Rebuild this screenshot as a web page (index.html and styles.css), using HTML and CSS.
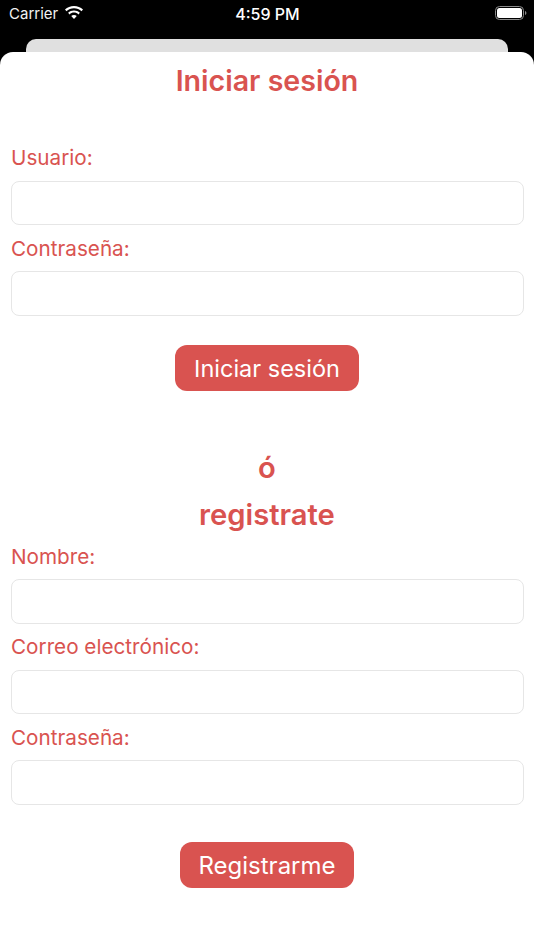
FILE: index.html
```html
<!DOCTYPE html>
<html lang="es">
<head>
<meta charset="utf-8">
<title>Iniciar sesión</title>
<link rel="stylesheet" href="styles.css">
</head>
<body>
<div class="status">
  <div class="status-left">
    <span class="carrier">Carrier</span>
    <svg class="wifi" width="20" height="15" viewBox="0 0 18 13"><path d="M9 2.600c2.600 0 5 1 6.800 2.700l1.300-1.400C15 1.900 12.100.7 9 .7S3 1.900.9 3.900l1.300 1.400C4 3.600 6.400 2.600 9 2.600z" fill="#fff"/><path d="M9 6.600c1.500 0 2.900.6 4 1.600l1.300-1.400C12.900 5.500 11 4.700 9 4.700s-3.900.8-5.300 2.100L5 8.200c1.100-1 2.500-1.600 4-1.600z" fill="#fff"/><path d="M9 8.700c-1 0-1.800.4-2.500 1L9 12.400l2.500-2.700c-.7-.6-1.500-1-2.500-1z" fill="#fff"/></svg>
  </div>
  <span class="time">4:59 PM</span>
  <svg class="battery" width="32" height="14" viewBox="0 0 32 14"><rect x="0.500" y="0.500" width="28" height="13" rx="4" fill="none" stroke="#8a8a8a"/><rect x="2" y="2" width="25" height="10" rx="2.500" fill="#fff"/><path d="M30 5v4c.8-.3 1.400-1.100 1.400-2S30.800 5.300 30 5z" fill="#8a8a8a"/></svg>
</div>
<div class="sheet-back"></div>
<main class="sheet">
  <h1 class="title">Iniciar sesión</h1>
  <form class="login">
    <label class="label">Usuario:</label>
    <div class="input"></div>
    <label class="label">Contraseña:</label>
    <div class="input"></div>
    <button type="button" class="btn">Iniciar sesión</button>
  </form>
  <h2 class="sub or">ó</h2>
  <h2 class="sub reg">registrate</h2>
  <form class="register">
    <label class="label">Nombre:</label>
    <div class="input"></div>
    <label class="label">Correo electrónico:</label>
    <div class="input"></div>
    <label class="label">Contraseña:</label>
    <div class="input"></div>
    <button type="button" class="btn btn-reg">Registrarme</button>
  </form>
</main>
</body>
</html>
```
FILE: styles.css
```css
* { box-sizing: border-box; }
html, body { margin: 0; padding: 0; }
body {
  width: 534px;
  height: 950px;
  background: #000;
  overflow: hidden;
  font-family: Inter, "Liberation Sans", sans-serif;
  display: flex;
  flex-direction: column;
}
.status {
  height: 39px;
  flex: none;
  display: grid;
  grid-template-columns: 1fr auto 1fr;
  padding: 4px 7px 0 9px;
  color: #fff;
  align-items: start;
}
.status-left { display: flex; align-items: center; gap: 6px; height: 20px; }
.carrier { font-size: 15px; line-height: 20px; color: #f2f2f2; }
.wifi { margin-top: -3px; }
.time { font-size: 16px; font-weight: 500; line-height: 20px; margin-left: -1px; }
.battery { justify-self: end; margin-top: 2px; }
.sheet-back {
  flex: none;
  height: 13px;
  margin: 0 26px;
  background: #e0e0e0;
  border-radius: 10px 10px 0 0;
}
.sheet {
  flex: 1;
  background: #fff;
  border-radius: 13px 13px 0 0;
  padding: 10px 10.500px 0;
  display: flex;
  flex-direction: column;
  color: #d95350;
}
.title {
  margin: 0 0 44px;
  font-size: 28.600px;
  line-height: 38px;
  font-weight: 600;
  text-align: center;
}
.login, .register { display: flex; flex-direction: column; }
.label {
  font-size: 20.700px;
  line-height: 28px;
  margin: 0 0 8.500px 0.500px;
  font-weight: 400;
}
.input {
  height: 44.500px;
  border: 1px solid #e6e6e6;
  border-radius: 8px;
  background: #fff;
  margin-bottom: 9.500px;
}
.btn {
  align-self: center;
  height: 46px;
  margin-top: 19.500px;
  padding: 2px 19px 0;
  border: 0;
  border-radius: 12px;
  background: #d95350;
  color: #fff;
  font: 400 23.500px/44px Inter, "Liberation Sans", sans-serif;
}
.sub {
  margin: 0;
  font-size: 29.200px;
  line-height: 47px;
  font-weight: 600;
  text-align: center;
}
.or { margin-top: 53px; }
.reg { margin-bottom: 5px; }
.btn-reg { margin-top: 28px; padding: 2px 18px 0; font-size: 24px; }
```
